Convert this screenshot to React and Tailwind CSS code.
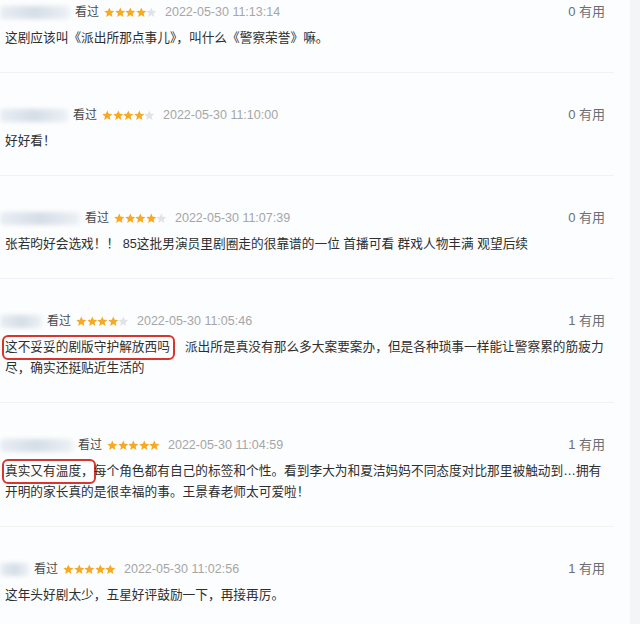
import React from "react";

const reviews = [
  {
    nameW: 70,
    stars: 4,
    date: "2022-05-30 11:13:14",
    votes: 0,
    lines: [["这剧应该叫《派出所那点事儿》，叫什么《警察荣誉》嘛。"]],
  },
  {
    nameW: 68,
    stars: 4,
    date: "2022-05-30 11:10:00",
    votes: 0,
    lines: [["好好看！"]],
  },
  {
    nameW: 80,
    stars: 4,
    date: "2022-05-30 11:07:39",
    votes: 0,
    lines: [["张若昀好会选戏！！ 85这批男演员里剧圈走的很靠谱的一位 首播可看 群戏人物丰满 观望后续"]],
  },
  {
    nameW: 42,
    stars: 4,
    date: "2022-05-30 11:05:46",
    votes: 1,
    mark: "这不妥妥的剧版守护解放西吗",
    gap: 12,
    pr: 3,
    lines: [
      ["派出所是真没有那么多大案要案办，但是各种琐事一样能让警察累的筋疲力"],
      ["尽，确实还挺贴近生活的"],
    ],
  },
  {
    nameW: 73,
    stars: 5,
    date: "2022-05-30 11:04:59",
    votes: 1,
    mark: "真实又有温度，",
    gap: 0,
    pr: 0,
    lines: [
      ["每个角色都有自己的标签和个性。看到李大为和夏洁妈妈不同态度对比那里被触动到…拥有"],
      ["开明的家长真的是很幸福的事。王景春老师太可爱啦！"],
    ],
  },
  {
    nameW: 29,
    stars: 5,
    date: "2022-05-30 11:02:56",
    votes: 1,
    lines: [["这年头好剧太少，五星好评鼓励一下，再接再厉。"]],
  },
];

function Star({ on }) {
  return (
    <svg viewBox="1 1.5 22 21" className="w-[10.6px] h-[10.6px]">
      <path
        d="M12 1.8l3 6.9 7.4.7-5.6 4.9 1.7 7.3L12 17.7l-6.5 3.9 1.7-7.3-5.6-4.9 7.4-.7z"
        fill={on ? "#f6a921" : "#e2e3e6"}
      />
    </svg>
  );
}

function Review({ r, last }) {
  return (
    <div
      className={
        "pl-[5px] pr-[7px] " +
        (last ? "pb-[20px]" : "pb-[23px] border-b border-[#f0f2f4]")
      }
    >
      <div className="flex items-center h-[20px] -ml-[5px]">
        <div className="h-[14px] flex items-center" style={{ width: r.nameW }}>
          <div className="h-[13px] w-full rounded-sm bg-gradient-to-r from-[#e9eef4] via-[#d5dde6] to-[#edf1f5] blur-[2px]" />
        </div>
        <span className="ml-[5px] text-[12px] text-[#4a4a4a]">看过</span>
        <div className="flex ml-[5px]">
          {[0, 1, 2, 3, 4].map((i) => (
            <Star key={i} on={i < r.stars} />
          ))}
        </div>
        <span className="ml-[8px] text-[12.5px] text-[#a6a6a6]">{r.date}</span>
        <span className="ml-auto mr-[2px] text-[13px] text-[#6b6f75]">
          {r.votes} 有用
        </span>
      </div>
      <div className="mt-[6px] text-[12.7px] leading-[21px] text-[#2e2e2e]">
        {r.lines.map((l, i) => (
          <div key={i} className="whitespace-nowrap">
            {i === 0 && r.mark && (
              <span
                className="inline-block -ml-px pl-px rounded-[4px] outline-2 outline-[#d8352d]"
                style={{ marginRight: r.gap, paddingRight: r.pr }}
              >
                {r.mark}
              </span>
            )}
            {l[0]}
          </div>
        ))}
      </div>
    </div>
  );
}

export default function App() {
  return (
    <div
      className="w-[640px] h-[624px] overflow-hidden flex bg-[#fcfdfe]"
      style={{ fontFamily: '"Liberation Sans", "Noto Sans CJK SC", sans-serif' }}
    >
      <div className="w-[614px] pt-[2px] flex flex-col gap-[32px]">
        {reviews.map((r, i) => (
          <Review key={i} r={r} last={i === reviews.length - 1} />
        ))}
      </div>
      <div className="flex-1" />
      <div className="w-[10px] bg-[#f4f5f7]" />
    </div>
  );
}
